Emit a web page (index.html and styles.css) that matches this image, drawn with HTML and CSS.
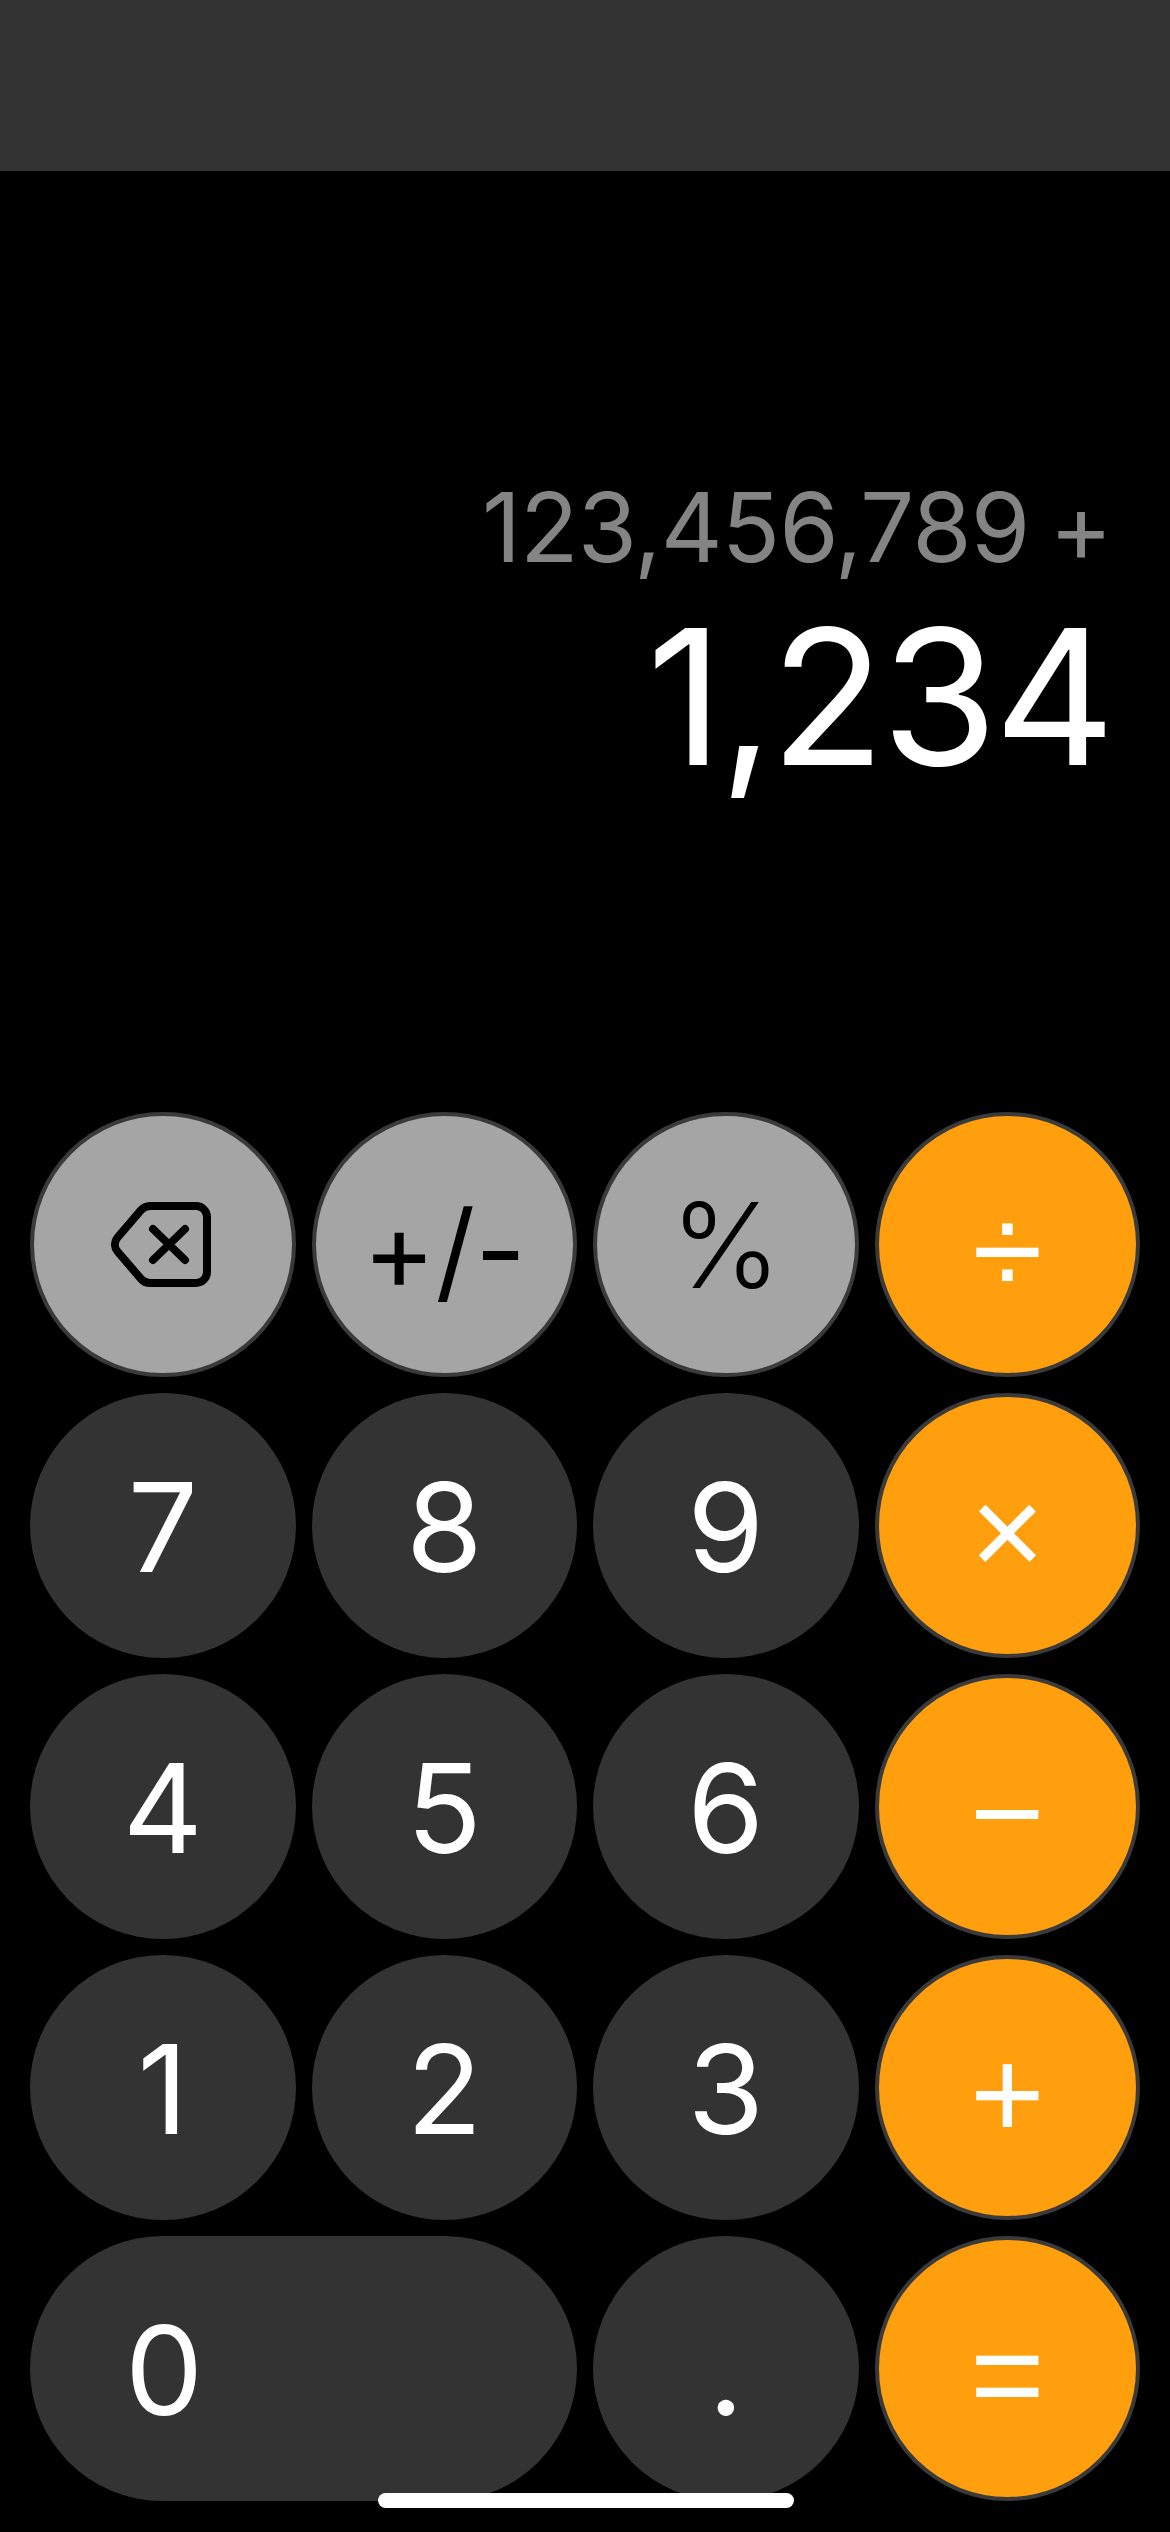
FILE: index.html
```html
<!DOCTYPE html>
<html lang="en">
<head>
<meta charset="utf-8">
<title>Calculator</title>
<link rel="stylesheet" href="styles.css">
</head>
<body>
<div class="app">
  <header class="topbar"></header>
  <section class="display">
    <div class="expr">123,456,789 +</div>
    <div class="value">1,234</div>
  </section>
  <main class="keypad">
    <button class="key fn" aria-label="Backspace">
      <svg class="backspace" viewBox="0 0 100 85" width="100" height="85">
        <path d="M39 4H85a11 11 0 0 1 11 11V70a11 11 0 0 1-11 11H39a12 12 0 0 1-9-4.200L6.500 49.500a11 11 0 0 1 0-14L30 8.200A12 12 0 0 1 39 4Z"/>
        <path d="M42 27 74 58M74 27 42 58"/>
      </svg>
    </button>
    <button class="key fn sign">+/-</button>
    <button class="key fn pct">%</button>
    <button class="key op">÷</button>
    <button class="key num">7</button>
    <button class="key num">8</button>
    <button class="key num">9</button>
    <button class="key op">×</button>
    <button class="key num">4</button>
    <button class="key num">5</button>
    <button class="key num">6</button>
    <button class="key op">−</button>
    <button class="key num">1</button>
    <button class="key num">2</button>
    <button class="key num">3</button>
    <button class="key op">+</button>
    <button class="key num zero"><span class="zero-label">0</span></button>
    <button class="key num">.</button>
    <button class="key op">=</button>
  </main>
  <div class="home"></div>
</div>
</body>
</html>
```
FILE: styles.css
```css
* { box-sizing: border-box; }
html, body { margin: 0; padding: 0; background: #000; }
.app {
  position: relative;
  width: 1170px;
  height: 2532px;
  overflow: hidden;
  display: flex;
  flex-direction: column;
  background: #000;
  font-family: "Inter", "Liberation Sans", sans-serif;
}
.topbar { height: 171px; background: #333; flex: none; }
.display {
  height: 941px;
  flex: none;
  padding: 301px 58px 0 0;
  text-align: right;
}
.expr {
  font-size: 96px;
  line-height: 110px;
  font-weight: 400;
  letter-spacing: -0.9px;
  word-spacing: -6px;
  color: #848484;
  white-space: nowrap;
}
.value {
  font-size: 188px;
  line-height: 230px;
  font-weight: 400;
  letter-spacing: -3.5px;
  color: #fff;
  white-space: nowrap;
}
.keypad {
  display: grid;
  grid-template-columns: repeat(4, 1fr);
  grid-auto-rows: 265px;
  gap: 16px;
  padding: 0 30px;
}
.key {
  display: flex;
  align-items: center;
  justify-content: center;
  width: 100%;
  height: 100%;
  padding: 3px 0 0;
  border: 0;
  border-radius: 133px;
  font-family: inherit;
  font-size: 124px;
  font-weight: 400;
  line-height: 1;
  color: #fff;
}
.num { background: #333; }
.fn { background: #a5a5a5; border: 4px solid #3a3a3a; color: #000; padding: 0; }
.op {
  background: #ff9f0d;
  border: 4px solid #3a3a3a;
  font-family: "Liberation Sans", sans-serif;
  font-size: 128px;
  padding: 13px 0 0;
}
.sign { font-size: 110px; padding-top: 10px; }
.pct { font-size: 118px; font-weight: 300; }
.zero { grid-column: span 2; justify-content: flex-start; }
.zero-label { width: 268px; text-align: center; }
.backspace { fill: none; stroke: #000; stroke-width: 8; stroke-linecap: round; stroke-linejoin: round; margin-right: 3px; }
.home {
  position: absolute;
  left: 378px;
  top: 2493px;
  width: 416px;
  height: 15px;
  border-radius: 8px;
  background: #fff;
}
```
